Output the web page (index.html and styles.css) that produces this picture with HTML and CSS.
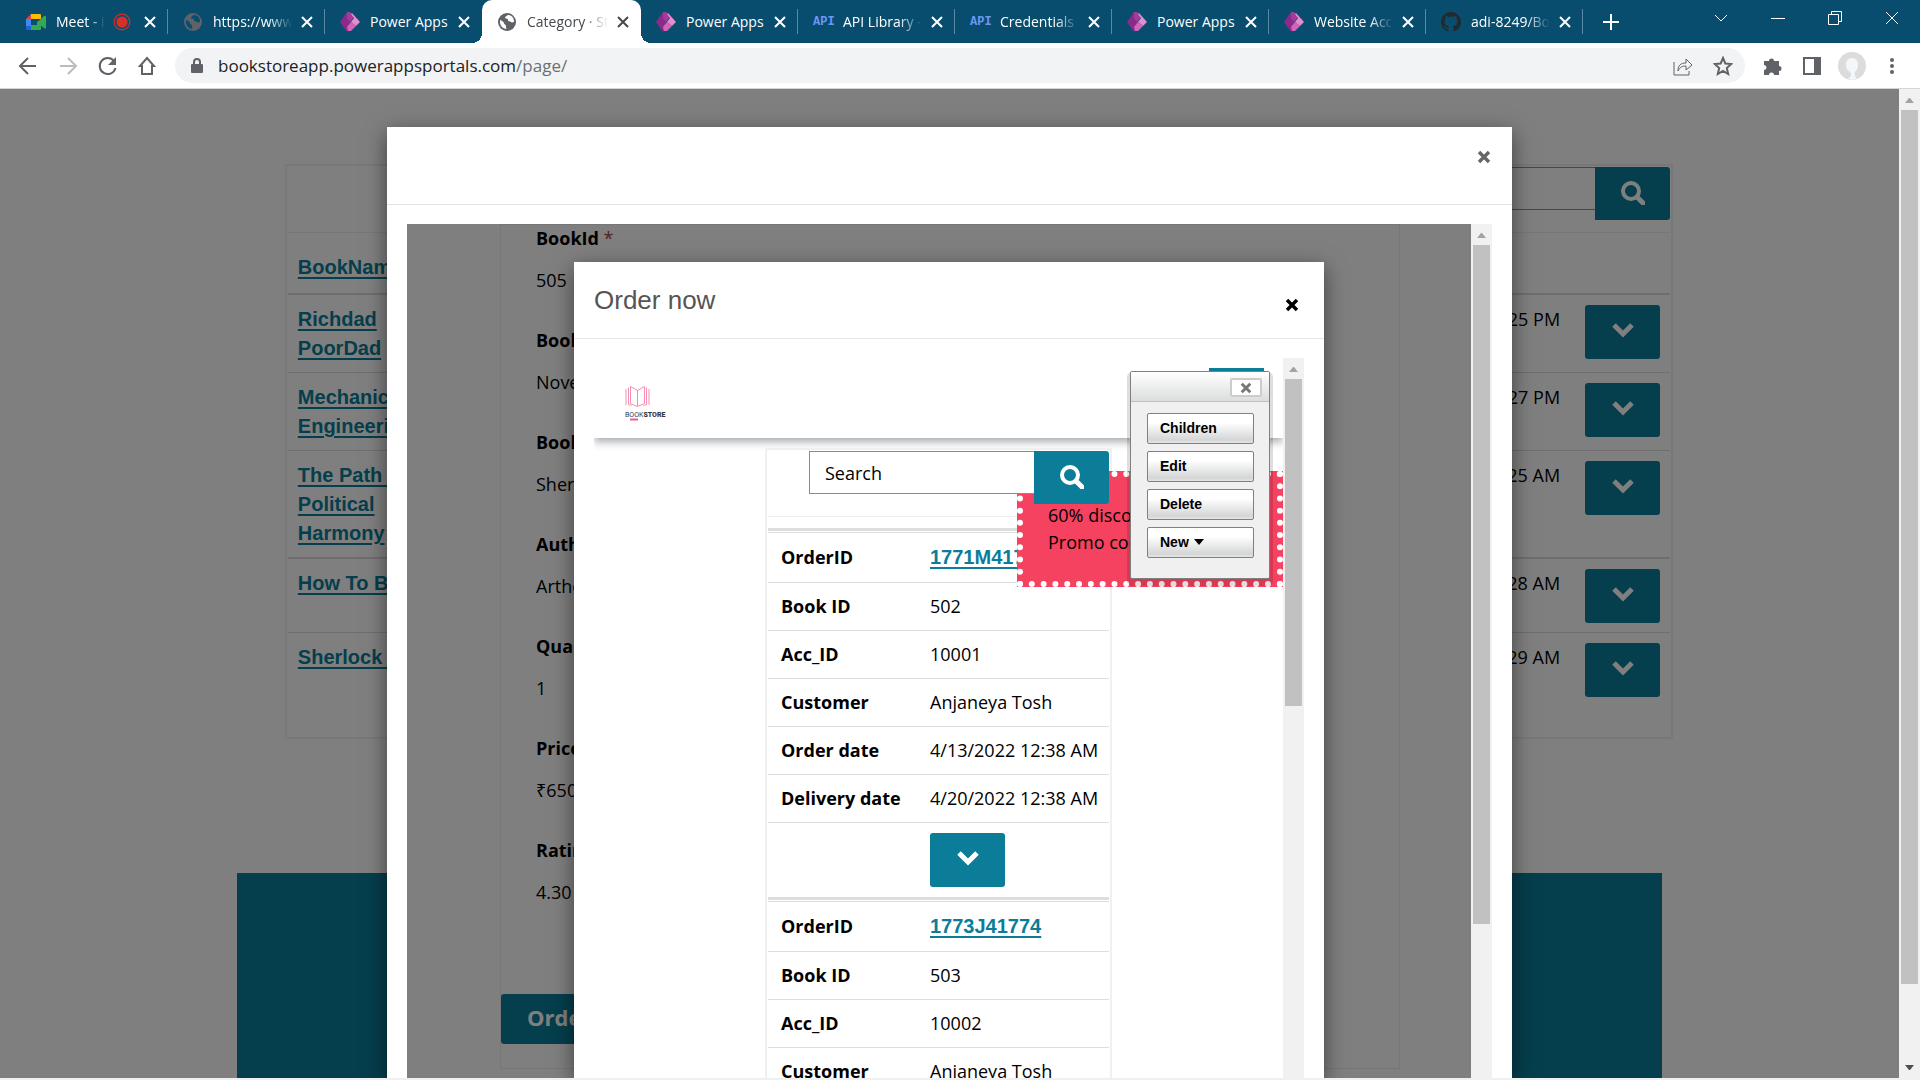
FILE: index.html
```html
<!DOCTYPE html>
<html lang="en">
<head>
<meta charset="utf-8">
<title>Category</title>
<link rel="stylesheet" href="styles.css">
</head>
<body>
<svg class="defs" aria-hidden="true">
  <symbol id="i-x" viewBox="0 0 14 14"><path d="M2 2l10 10M12 2L2 12" fill="none" stroke="currentColor" stroke-width="2"/></symbol>
  <symbol id="i-xb" viewBox="0 0 14 14"><path d="M2 2l10 10M12 2L2 12" fill="none" stroke="currentColor" stroke-width="3.400"/></symbol>
  <symbol id="i-globe" viewBox="0 0 20 20"><circle cx="10" cy="10" r="9" fill="currentColor"/><path d="M3 8c2 1 3 1 4 3 0 2 2 1 2 3s0 2 1 3C6 17 3 14 3 10zM11 3c-1 1-3 1-3 3 1 1 3 0 3 2s2 1 3 2 2 0 3 0c0-4-2-7-6-7z" class="cut"/></symbol>
  <symbol id="i-power" viewBox="0 0 20 20"><path d="M7 0L0 10l7 10 5-7-2-3 2-3z" fill="#8c2a8a"/><path d="M7 0h3l4 5-4 5-3-4z" fill="#a43a9c"/><path d="M12 1l8 9-4 4-5-4 3-4-3-4z" fill="#e58ccb"/><path d="M11 10l5 4-5 5h-3l-1-4z" fill="#d166b9"/></symbol>
  <symbol id="i-search" viewBox="0 0 24 24"><circle cx="10" cy="10" r="8" fill="none" stroke="currentColor" stroke-width="4"/><path d="M16 16l6 6" stroke="currentColor" stroke-width="5" stroke-linecap="round"/></symbol>
  <symbol id="i-down" viewBox="0 0 22 16"><path d="M2 3l9 9 9-9" fill="none" stroke="currentColor" stroke-width="5"/></symbol>
</svg>

<header class="tabs">
  <div class="tab sep">
    <svg class="fav" viewBox="0 0 20 20"><path d="M5 2h9q1 0 1 1v4H5z" fill="#fbbc04"/><path d="M0 7l5-5v5z" fill="#ea4335"/><path d="M0 7h5v7H0z" fill="#4285f4"/><path d="M0 14h5v4H1q-1 0-1-1z" fill="#1967d2"/><path d="M5 13h6v-3l4-3v10q0 1-1 1H5zM12 10l6-6q2-1 2 1v11q0 1-2 0l-6-5z" fill="#34a853"/></svg>
    <span class="tab-title">Meet - i</span>
    <svg class="rec" viewBox="0 0 16 16"><circle cx="8" cy="8" r="7" fill="none" stroke="#d93025"/><circle cx="8" cy="8" r="5" fill="#d93025"/></svg>
    <button class="tab-x" aria-label="Close tab"><svg><use href="#i-x"/></svg></button>
  </div>
  <div class="tab sep"><svg class="fav gray"><use href="#i-globe"/></svg><span class="tab-title">https://www.goo</span><button class="tab-x" aria-label="Close tab"><svg><use href="#i-x"/></svg></button></div>
  <div class="tab"><svg class="fav"><use href="#i-power"/></svg><span class="tab-title whole">Power Apps</span><button class="tab-x" aria-label="Close tab"><svg><use href="#i-x"/></svg></button></div>
  <div class="tab active"><svg class="fav gray"><use href="#i-globe"/></svg><span class="tab-title">Category · Sta</span><button class="tab-x" aria-label="Close tab"><svg><use href="#i-x"/></svg></button></div>
  <div class="tab sep"><svg class="fav"><use href="#i-power"/></svg><span class="tab-title whole">Power Apps</span><button class="tab-x" aria-label="Close tab"><svg><use href="#i-x"/></svg></button></div>
  <div class="tab sep"><span class="fav api">API</span><span class="tab-title">API Library - A</span><button class="tab-x" aria-label="Close tab"><svg><use href="#i-x"/></svg></button></div>
  <div class="tab sep"><span class="fav api">API</span><span class="tab-title">Credentials – A</span><button class="tab-x" aria-label="Close tab"><svg><use href="#i-x"/></svg></button></div>
  <div class="tab sep"><svg class="fav"><use href="#i-power"/></svg><span class="tab-title whole">Power Apps</span><button class="tab-x" aria-label="Close tab"><svg><use href="#i-x"/></svg></button></div>
  <div class="tab sep"><svg class="fav"><use href="#i-power"/></svg><span class="tab-title">Website Access</span><button class="tab-x" aria-label="Close tab"><svg><use href="#i-x"/></svg></button></div>
  <div class="tab sep"><svg class="fav" viewBox="0 0 16 16"><path fill="#24292f" d="M8 0C3.6 0 0 3.6 0 8c0 3.500 2.300 6.500 5.500 7.600.4.100.5-.2.5-.4V13.700c-2.200.5-2.700-1-2.700-1-.4-.9-.9-1.200-.9-1.200-.7-.5.100-.5.100-.5.800.100 1.200.8 1.200.8.700 1.200 1.900.9 2.300.7.100-.5.300-.9.500-1.100-1.800-.2-3.600-.9-3.600-4 0-.9.300-1.600.8-2.200-.1-.2-.4-1 .1-2.100 0 0 .7-.2 2.200.8a7.500 7.500 0 014 0c1.500-1 2.200-.8 2.200-.8.400 1.100.2 1.900.1 2.100.5.600.8 1.300.8 2.200 0 3.100-1.900 3.700-3.700 3.900.3.300.6.800.6 1.500v2.300c0 .2.100.5.500.4A8 8 0 0016 8c0-4.400-3.600-8-8-8z"/></svg><span class="tab-title">adi-8249/Books</span><button class="tab-x" aria-label="Close tab"><svg><use href="#i-x"/></svg></button></div>
  <button class="newtab" aria-label="New tab"><svg viewBox="0 0 16 16"><path d="M8 0v16M0 8h16" stroke="#fff" stroke-width="2"/></svg></button>
  <div class="winbtns">
    <button aria-label="Search tabs"><svg viewBox="0 0 14 14"><path d="M1 4l6 6 6-6" fill="none" stroke="#fff"/></svg></button>
    <button aria-label="Minimize"><svg viewBox="0 0 14 14"><path d="M0 7.500h14" stroke="#fff"/></svg></button>
    <button aria-label="Restore"><svg viewBox="0 0 14 14"><path d="M.5 3.500h10v10H.5zM3.500 3.500v-3h10v10h-3" fill="none" stroke="#fff"/></svg></button>
    <button aria-label="Close"><svg viewBox="0 0 14 14"><path d="M1 1l12 12M13 1L1 13" stroke="#fff"/></svg></button>
  </div>
</header>

<nav class="toolbar">
  <button aria-label="Back"><svg viewBox="0 0 20 20"><path d="M18 10H3M10 2l-8 8 8 8" fill="none" stroke="#5f6368" stroke-width="2"/></svg></button>
  <button aria-label="Forward"><svg viewBox="0 0 20 20"><path d="M2 10h15M10 2l8 8-8 8" fill="none" stroke="#babcbe" stroke-width="2"/></svg></button>
  <button aria-label="Reload"><svg viewBox="0 0 20 20"><path d="M16 5a8 8 0 101.500 7" fill="none" stroke="#5f6368" stroke-width="2"/><path d="M18 1v8h-8z" fill="#5f6368"/></svg></button>
  <button aria-label="Home"><svg viewBox="0 0 20 20"><path d="M2 10l7-8 7 8h-2v8H4v-8z" fill="none" stroke="#5f6368" stroke-width="2"/></svg></button>
  <div class="omnibox">
    <svg class="lock" viewBox="0 0 12 16"><rect y="6" width="12" height="9" rx="1" fill="#5f6368"/><path d="M3 7V4a3 3 0 016 0v3" fill="none" stroke="#5f6368" stroke-width="2"/></svg>
    <p class="url">bookstoreapp.powerappsportals.com<span>/page/</span></p>
    <button aria-label="Share"><svg viewBox="0 0 20 20"><path d="M1 6v13h15v-4M5 15c0-6 3-8 8-8V3l6 6-6 5v-4c-4 0-6 1-8 5z" fill="none" stroke="#5f6368"/></svg></button>
    <button aria-label="Bookmark"><svg viewBox="0 0 20 20"><path d="M10 2l2.300 5.500 6 .5-4.500 4 1.400 6L10 15l-5.200 3 1.400-6L1.700 8l6-.5z" fill="none" stroke="#5f6368" stroke-width="2"/></svg></button>
  </div>
  <div class="ext">
    <button aria-label="Extensions"><svg viewBox="0 0 20 20"><path d="M2 5h5a2.500 2.500 0 015 0h5v5a2.500 2.500 0 010 5v4h-5a2.500 2.500 0 00-5 0H2v-5a2.500 2.500 0 000-5z" fill="#5f6368"/></svg></button>
    <button aria-label="Side panel"><svg viewBox="0 0 20 20"><path d="M2 2h16v16H2z" fill="none" stroke="#5f6368" stroke-width="2"/><path d="M12 2h6v16h-6z" fill="#5f6368"/></svg></button>
    <button aria-label="Profile"><svg class="avatar" viewBox="0 0 28 28"><circle cx="14" cy="14" r="14" fill="#dcdcdc"/><path d="M14 6c4 0 6 3 6 7s-2 6-3 7 0 5 2 7a14 14 0 01-9 0c3-2 4-5 2-7-3-2-4-4-4-7 0-4 2-7 6-7z" fill="#f4f7fa"/></svg></button>
    <button aria-label="Menu"><svg viewBox="0 0 20 20"><g fill="#5f6368"><circle cx="10" cy="4" r="2"/><circle cx="10" cy="10" r="2"/><circle cx="10" cy="16" r="2"/></g></svg></button>
  </div>
</nav>

<div class="frame viewport">
  <div class="frame-doc">
    <main class="page">
      <section class="books">
        <div class="search">
          <input type="text" aria-label="Search books"><button class="teal" aria-label="Search"><svg><use href="#i-search"/></svg></button>
        </div>
        <table class="book-table">
          <thead><tr><th scope="col"><a href="#">BookName</a></th><th></th><th></th></tr></thead>
          <tbody>
            <tr><td><a href="#">Richdad<br>PoorDad</a></td><td class="when">4/12/2022 3:25 PM</td><td class="act"><button class="teal drop" aria-label="Actions"><svg><use href="#i-down"/></svg></button></td></tr>
            <tr><td><a href="#">Mechanical<br>Engineering</a></td><td class="when">4/12/2022 3:27 PM</td><td class="act"><button class="teal drop" aria-label="Actions"><svg><use href="#i-down"/></svg></button></td></tr>
            <tr class="heavy"><td><a href="#">The Path To<br>Political<br>Harmony</a></td><td class="when">4/13/2022 12:25 AM</td><td class="act"><button class="teal drop" aria-label="Actions"><svg><use href="#i-down"/></svg></button></td></tr>
            <tr><td><a href="#">How To Be</a></td><td class="when">4/13/2022 12:28 AM</td><td class="act"><button class="teal drop" aria-label="Actions"><svg><use href="#i-down"/></svg></button></td></tr>
            <tr class="last"><td><a href="#">Sherlock Holmes</a></td><td class="when">4/13/2022 12:29 AM</td><td class="act"><button class="teal drop" aria-label="Actions"><svg><use href="#i-down"/></svg></button></td></tr>
          </tbody>
        </table>
      </section>
      <footer class="foot"></footer>
    </main>

    <div class="overlay">
      <section class="modal outer" role="dialog" aria-label="Book details">
        <header class="modal-head"><h2></h2><button class="modal-x soft" aria-label="Close"><svg><use href="#i-xb"/></svg></button></header>
        <div class="modal-body">
          <div class="frame">
            <div class="frame-doc">
              <div class="form">
                <dl>
                  <div><dt>BookId <span class="req">*</span></dt><dd>505</dd></div>
                  <div><dt>BookType</dt><dd>Novel</dd></div>
                  <div><dt>BookName</dt><dd>Sherlock</dd></div>
                  <div><dt>Author</dt><dd>Arthor</dd></div>
                  <div><dt>Quantity</dt><dd>1</dd></div>
                  <div><dt>Price</dt><dd>₹650.00</dd></div>
                  <div><dt>Rating</dt><dd>4.30</dd></div>
                </dl>
                <button class="teal order-now">Order now</button>
              </div>

              <div class="overlay">
                <section class="modal inner" role="dialog" aria-labelledby="order-title">
                  <header class="modal-head"><h2 id="order-title">Order now</h2><button class="modal-x" aria-label="Close"><svg><use href="#i-xb"/></svg></button></header>
                  <div class="modal-body">
                    <div class="frame">
                      <div class="frame-doc">
                        <div class="site-nav">
                          <svg class="logo" viewBox="0 0 44 36"><g fill="none" stroke="#f58fb0"><path d="M5.500 1.500v17l7 3 7-3v-17l-7 4zM12.500 5v16"/><path d="M3.500 2.500v17l3 1M21.500 2.500v17l-3 1M1 4v16M24 4v16"/></g><text x="0" y="32">BOOK<tspan>STORE</tspan></text><path d="M5 34.500h8" stroke="#ee5b8b" stroke-width="2"/></svg>
                          <button class="teal toggler" aria-label="Toggle navigation"></button>
                        </div>
                        <section class="orders">
                          <div class="search">
                            <input type="text" placeholder="Search" aria-label="Search orders"><button class="teal" aria-label="Search"><svg><use href="#i-search"/></svg></button>
                          </div>
                          <table class="order">
                            <tr class="id"><th scope="row">OrderID</th><td><a href="#">1771M41772</a></td></tr>
                            <tr><th scope="row">Book ID</th><td>502</td></tr>
                            <tr><th scope="row">Acc_ID</th><td>10001</td></tr>
                            <tr><th scope="row">Customer</th><td>Anjaneya Tosh</td></tr>
                            <tr><th scope="row">Order date</th><td>4/13/2022 12:38 AM</td></tr>
                            <tr><th scope="row">Delivery date</th><td>4/20/2022 12:38 AM</td></tr>
                            <tr class="act"><th></th><td><button class="teal drop" aria-label="Actions"><svg><use href="#i-down"/></svg></button></td></tr>
                          </table>
                          <table class="order">
                            <tr class="id"><th scope="row">OrderID</th><td><a href="#">1773J41774</a></td></tr>
                            <tr><th scope="row">Book ID</th><td>503</td></tr>
                            <tr><th scope="row">Acc_ID</th><td>10002</td></tr>
                            <tr><th scope="row">Customer</th><td>Anjaneya Tosh</td></tr>
                            <tr><th scope="row">Order date</th><td>4/13/2022 12:40 AM</td></tr>
                          </table>
                        </section>
                        <aside class="promo"><p>60% discount<br>Promo code</p></aside>
                        <div class="editor">
                          <div class="editor-head"><button aria-label="Close"><svg><use href="#i-xb"/></svg></button></div>
                          <div class="editor-body">
                            <button>Children</button>
                            <button>Edit</button>
                            <button>Delete</button>
                            <button>New <svg viewBox="0 0 10 6"><path d="M0 0h10L5 6z"/></svg></button>
                          </div>
                        </div>
                      </div>
                      <div class="bar"><svg viewBox="0 0 21 21"><path d="M6 14h9l-4-5h-1z"/></svg><i class="thumb short"></i></div>
                    </div>
                  </div>
                </section>
              </div>
            </div>
            <div class="bar"><svg viewBox="0 0 21 21"><path d="M6 14h9l-4-5h-1z"/></svg><i class="thumb mid"></i></div>
          </div>
        </div>
      </section>
    </div>
  </div>
  <div class="bar"><svg viewBox="0 0 21 21"><path d="M6 14h9l-4-5h-1z"/></svg><i class="thumb long"></i><svg class="end" viewBox="0 0 21 21"><path d="M6 8h9l-4 5h-1z"/></svg></div>
</div>
</body>
</html>
```
FILE: styles.css
```css
* { box-sizing: border-box; }
body {
  margin: 0;
  height: 100vh;
  display: flex;
  flex-direction: column;
  overflow: hidden;
  background: #f0f0f0;
  color: #000;
  font: 18px/27px "Open Sans", "Noto Sans", sans-serif;
}
.defs { display: none; }
button { border: 0; padding: 0; background: none; font: inherit; color: inherit; display: flex; align-items: center; justify-content: center; }
h2, p, dl, dd { margin: 0; }
svg { display: block; flex: none; }
a { color: #0b7d99; font-family: "Liberation Sans", sans-serif; font-size: 20px; font-weight: 700; text-underline-offset: 3px; text-decoration-thickness: 2px; }

/* Browser tabs */
.tabs { --cut: #084d6e; display: flex; flex: none; height: 43px; padding-left: 11px; background: #084d6e; color: #fff; font-size: 14px; line-height: 20px; }
.tab { display: flex; align-items: center; flex: none; width: 157px; padding: 0 11px 0 15px; position: relative; }
.tab.sep::after { content: ""; position: absolute; right: 0; top: 9px; width: 1px; height: 25px; background: #5a8aa2; }
.fav { width: 20px; height: 20px; margin-right: 10px; flex: none; }
.gray { color: #5f6368; }
.cut { fill: var(--cut); }
.api { font: 700 12px/20px "Liberation Mono", monospace; color: #6c97f5; }
.tab-title { flex: 1; overflow: hidden; white-space: nowrap; margin-right: 8px; mask-image: linear-gradient(to right, #000 70%, transparent); }
.tab-title.whole { mask-image: none; }
.rec { width: 18px; height: 18px; margin-right: 12px; }
.tab-x svg { width: 14px; height: 14px; }
.tab.active { --cut: #fff; width: 159px; background: #fff; color: #45494d; border-radius: 10px 10px 0 0; }
.tab.active::before, .tab.active::after { content: ""; position: absolute; bottom: 0; width: 10px; height: 10px; }
.tab.active::before { left: -10px; background: radial-gradient(circle at 0 0, transparent 10px, #fff 10px); }
.tab.active::after { right: -10px; background: radial-gradient(circle at 100% 0, transparent 10px, #fff 10px); }
.newtab { width: 55px; }
.newtab svg { width: 16px; height: 16px; }
.winbtns { display: flex; margin-left: auto; height: 36px; }
.winbtns button { width: 57px; }
.winbtns svg { width: 14px; height: 14px; }

/* Browser toolbar */
.toolbar { display: flex; flex: none; align-items: center; height: 46px; padding-left: 8px; background: #fff; border-bottom: 1px solid #d5d5d5; }
.toolbar button { width: 40px; }
.toolbar svg { width: 20px; height: 20px; }
.omnibox { flex: 1; display: flex; align-items: center; height: 35px; margin-left: 7px; padding: 0 2px 0 16px; border-radius: 18px; background: #f1f3f4; }
.omnibox .lock { width: 12px; height: 16px; margin-right: 15px; }
.url { flex: 1; font-size: 17px; color: #202124; }
.url span { color: #6b6f73; }
.ext { display: flex; align-items: center; padding: 0 8px 0 7px; }
.toolbar .avatar { width: 28px; height: 28px; }

/* Scrolling documents */
.frame { display: flex; flex: 1; min-height: 0; background: #fff; }
.viewport { margin-bottom: 2px; }
.frame-doc { flex: 1; min-width: 0; position: relative; overflow: hidden; }
.bar { flex: none; display: flex; flex-direction: column; width: 21px; background: #f1f1f1; }
.bar svg { width: 21px; height: 21px; fill: #a3a3a3; }
.bar .end { margin-top: auto; fill: #505050; }
.thumb { margin: 0 2px; background: #c1c1c1; }
.long { height: 874px; }
.mid { height: 679px; }
.short { height: 327px; }

.teal { background: #0b7d99; color: #fff; border-radius: 3px; }
.search { display: flex; justify-content: flex-end; }
.search input { width: 225px; height: 43px; padding: 0 15px; border: 1px solid #8c8c8c; border-right: 0; font: inherit; background: #fff; }
.search input::placeholder { color: #000; opacity: 1; }
.search .teal { width: 75px; height: 53px; padding-bottom: 2px; border-radius: 0 3px 3px 0; }
.search svg { width: 24px; height: 24px; }
.drop { width: 75px; height: 54px; padding-bottom: 4px; }
.drop svg { width: 22px; height: 16px; }
table { border-collapse: separate; border-spacing: 0; width: 100%; }

/* Book list */
.books { width: calc(73% + 2px); margin: 75px 0 0 15%; padding: 1px; border: 2px solid #f0f0f0; }
.books .search { height: 66px; border-bottom: 1px solid #eee; }
.book-table { line-height: 29px; white-space: nowrap; }
.book-table th { height: 62px; padding: 8px 10px 0; text-align: left; border-bottom: 2px solid #ddd; }
.book-table td { padding: 10px 10px 9px; vertical-align: top; border-bottom: 1px solid #ddd; }
.book-table .heavy td { border-bottom-width: 2px; }
.book-table .last td { height: 103px; border-bottom: 0; }
.book-table .when { text-align: right; padding-right: 15px; }
.book-table .act { width: 95px; }
.foot { width: 75%; height: 300px; margin: 134px auto 0; background: #0b7d99; }

/* Modals */
.overlay { position: absolute; inset: 0; display: flex; padding-top: 38px; background: rgba(0, 0, 0, .5); }
.modal { display: flex; flex-direction: column; width: 1125px; max-width: 94%; margin: 0 auto; background: #fff; box-shadow: 0 6px 20px rgba(0, 0, 0, .5); }
.modal .overlay { padding-left: 20px; }
.modal.inner { width: 750px; }
.modal-head { display: flex; flex: none; justify-content: space-between; height: 77px; padding: 0 20px; border-bottom: 1px solid #e5e5e5; }
.outer > .modal-head { height: 78px; }
.modal-head h2 { margin-top: 24px; font: 26px/28px "Liberation Sans", sans-serif; color: #555; }
.modal-x { align-self: flex-start; width: 24px; height: 24px; margin-top: 31px; }
.modal-x.soft { color: #666; margin-top: 18px; margin-right: -4px; }
.modal-x svg { width: 14px; height: 14px; }
.modal-body { flex: 1; min-height: 0; display: flex; padding: 19px 20px 0; }

/* Book details */
.form { width: 900px; max-width: 85%; margin-left: 93px; padding-bottom: 24px; border: 1px solid #eee; }
.form dl { padding-left: 35px; }
.form dl div { display: flex; flex-direction: column; gap: 15px; height: 102px; }
.form dt { font-weight: 700; }
.req { color: #a94442; font-weight: 400; }
.order-now { height: 50px; padding: 0 26px 3px; margin-top: 55px; font-size: 22px; font-weight: 700; }

/* Order page */
.site-nav { display: flex; justify-content: space-between; height: 80px; padding: 10px 19px 0 31px; box-shadow: 0 4px 8px rgba(40, 50, 60, .4); }
.logo { width: 44px; height: 36px; margin-top: 17px; }
.logo text { font: 7px Roboto, sans-serif; fill: #333a44; }
.logo tspan { font-weight: 900; }
.toggler { width: 55px; height: 45px; border-radius: 0; }
.orders { width: 347px; margin: 10px auto 0; padding: 1px; border: 2px solid #f0f0f0; }
.orders .search { height: 66px; margin-bottom: 11px; border-bottom: 1px solid #eee; }
.orders .search > * { position: relative; z-index: 2; }
table.order { padding-top: 1px; border-top: 3px solid #ddd; }
table.order tr:first-child > * { border-top: 1px solid #ddd; }
table.order th { width: 152px; padding: 0 13px; font-weight: 700; text-align: left; white-space: nowrap; }
table.order td { padding: 0 10px; white-space: nowrap; }
table.order tr > * { height: 48px; border-bottom: 1px solid #ddd; }
table.order .id > * { height: 51px; }
table.order .act > * { height: 74px; border-bottom: 0; }
.promo { position: absolute; right: 0; top: 113px; width: 266px; height: 116px; padding: 25px; border: 6px dotted #fff; background: #f54260; }
.editor { position: absolute; z-index: 3; right: 13px; top: 13px; width: 140px; height: 208px; background: #f0f0f0; border: 1px solid #808080; border-radius: 2px; box-shadow: 0 4px 0 3px rgba(0, 0, 0, .13); }
.editor-head { display: flex; justify-content: flex-end; height: 30px; padding: 6px 7px; background: linear-gradient(#fff, #dcddde); border-bottom: 1px solid #c0c0c0; }
.editor-head button { width: 32px; height: 19px; background: #fff; border: 2px solid #ccc; border-radius: 2px; color: #777; }
.editor-head svg { width: 12px; height: 12px; }
.editor-body { display: flex; flex-direction: column; gap: 7px; padding: 11px 15px 0 16px; }
.editor-body button { height: 31px; gap: 5px; padding: 0 0 2px 12px; justify-content: flex-start; font: 700 14px/16px "Liberation Sans", sans-serif; border: 1px solid #808080; border-radius: 2px; background: linear-gradient(#fff 30%, #d4d5d6 90%, #e6e6e6); }
.editor-body svg { width: 10px; height: 6px; }
```
